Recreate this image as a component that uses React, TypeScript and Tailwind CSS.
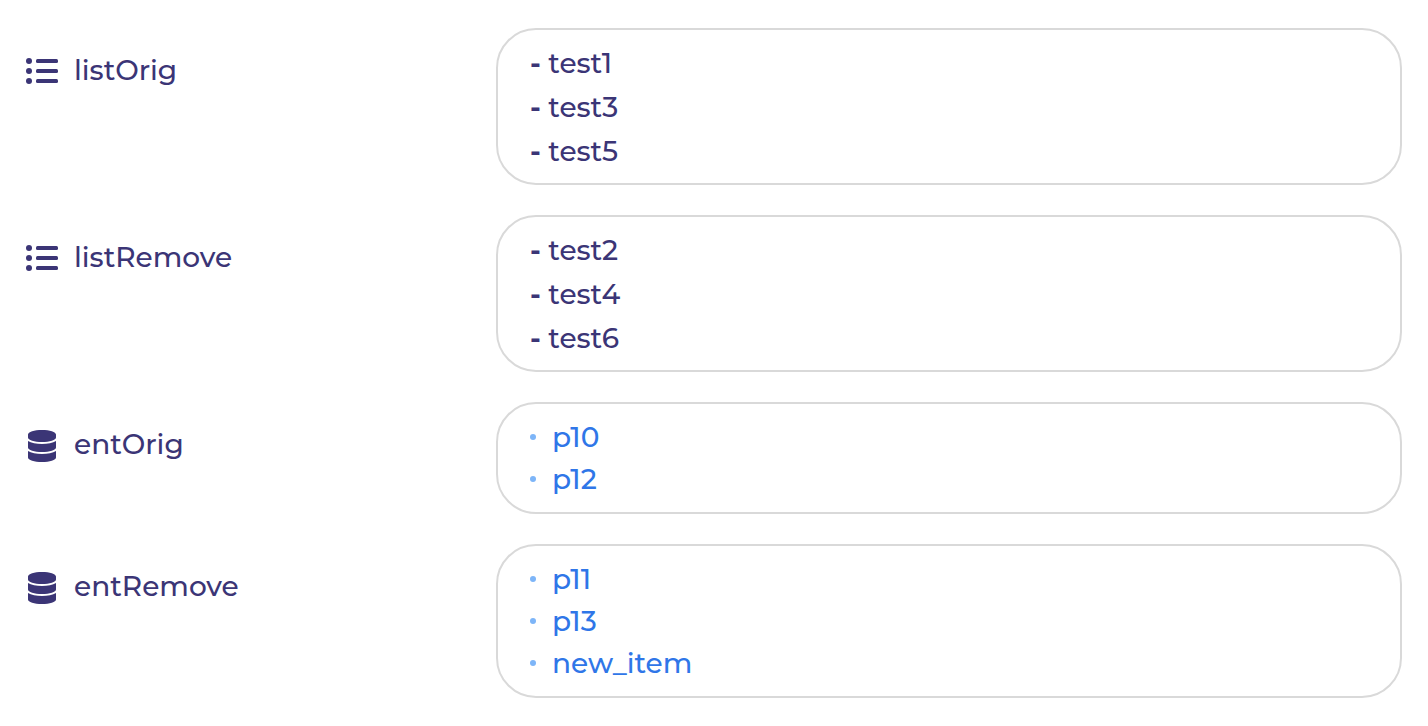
import React from "react";
import { FaDatabase } from "react-icons/fa";

type Field = {
  name: string;
  kind: "list" | "entity";
  items: string[];
};

const fields: Field[] = [
  { name: "listOrig", kind: "list", items: ["test1", "test3", "test5"] },
  { name: "listRemove", kind: "list", items: ["test2", "test4", "test6"] },
  { name: "entOrig", kind: "entity", items: ["p10", "p12"] },
  { name: "entRemove", kind: "entity", items: ["p11", "p13", "new_item"] },
];

function ListIcon() {
  return (
    <svg viewBox="0 0 32 32" className="w-8 h-8" fill="currentColor" aria-hidden="true">
      <circle cx="3" cy="5" r="3" />
      <circle cx="3" cy="15" r="3" />
      <circle cx="3" cy="25" r="3" />
      <rect x="10" y="3" width="22" height="4" rx="1.5" />
      <rect x="10" y="13" width="22" height="4" rx="1.5" />
      <rect x="10" y="23" width="22" height="4" rx="1.5" />
    </svg>
  );
}

function FieldRow({ field }: { field: Field }) {
  return (
    <section className="grid grid-cols-[470px_1fr] items-start" aria-labelledby={field.name}>
      <div className="flex items-center gap-4 pt-[22px]">
        {field.kind === "list" ? <ListIcon /> : <FaDatabase className="w-8 h-8" aria-hidden="true" />}
        <h2 id={field.name} className="pb-1 leading-10">
          {field.name}
        </h2>
      </div>

      {field.kind === "list" ? (
        <ul className="rounded-[40px] border-2 border-[#d9d9d9] px-8 pt-[11px] pb-[10px] leading-[44px]">
          {field.items.map((item) => (
            <li key={item}>
              <span className="font-bold">-</span> {item}
            </li>
          ))}
        </ul>
      ) : (
        <ul className="rounded-[40px] border-2 border-[#d9d9d9] px-8 py-3 leading-[42px] text-[#2f76e8]">
          {field.items.map((item) => (
            <li key={item} className="flex items-center gap-4">
              <span className="w-1.5 h-1.5 rounded-full bg-[#7db5f8]" />
              <a href={`#${item}`}>{item}</a>
            </li>
          ))}
        </ul>
      )}
    </section>
  );
}

export default function App() {
  return (
    <main className="flex min-h-screen flex-col gap-[30px] bg-white px-[26px] py-7 font-['Montserrat','Inter',sans-serif] text-[28px] font-medium text-[#3b3576]">
      {fields.map((field) => (
        <FieldRow key={field.name} field={field} />
      ))}
    </main>
  );
}
